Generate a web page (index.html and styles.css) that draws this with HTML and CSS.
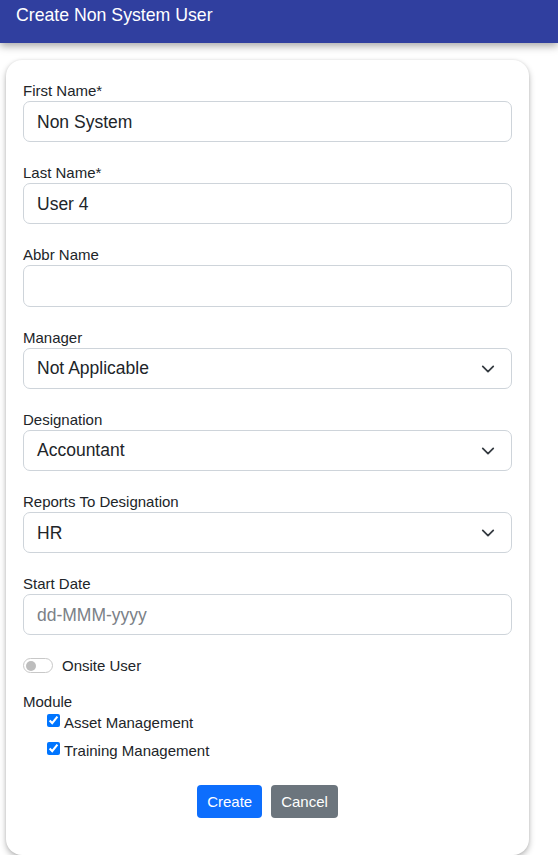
FILE: index.html
```html
<!DOCTYPE html>
<html>
<head>
<meta charset="utf-8">
<link rel="stylesheet" href="styles.css">
</head>
<body>
<header class="topbar"><span class="title">Create Non System User</span></header>
<main class="card">
  <div class="field">
    <label class="lbl">First Name*</label>
    <input class="ctl" type="text" value="Non System">
  </div>
  <div class="field">
    <label class="lbl">Last Name*</label>
    <input class="ctl" type="text" value="User 4">
  </div>
  <div class="field">
    <label class="lbl">Abbr Name</label>
    <input class="ctl" type="text" value="">
  </div>
  <div class="field">
    <label class="lbl">Manager</label>
    <div class="sel"><span>Not Applicable</span><svg class="chev" width="16" height="16" viewBox="0 0 16 16"><path d="M2 5l6 6 6-6" fill="none" stroke="#343a40" stroke-width="2" stroke-linecap="round" stroke-linejoin="round"/></svg></div>
  </div>
  <div class="field">
    <label class="lbl">Designation</label>
    <div class="sel"><span>Accountant</span><svg class="chev" width="16" height="16" viewBox="0 0 16 16"><path d="M2 5l6 6 6-6" fill="none" stroke="#343a40" stroke-width="2" stroke-linecap="round" stroke-linejoin="round"/></svg></div>
  </div>
  <div class="field">
    <label class="lbl">Reports To Designation</label>
    <div class="sel"><span>HR</span><svg class="chev" width="16" height="16" viewBox="0 0 16 16"><path d="M2 5l6 6 6-6" fill="none" stroke="#343a40" stroke-width="2" stroke-linecap="round" stroke-linejoin="round"/></svg></div>
  </div>
  <div class="field">
    <label class="lbl">Start Date</label>
    <input class="ctl" type="text" placeholder="dd-MMM-yyyy">
  </div>
  <div class="switchrow">
    <span class="switch"><span class="knob"></span></span>
    <span class="lbl">Onsite User</span>
  </div>
  <div class="lbl module">Module</div>
  <div class="checks">
    <label class="chk"><input type="checkbox" checked>Asset Management</label>
    <label class="chk"><input type="checkbox" checked>Training Management</label>
  </div>
  <div class="actions">
    <button class="btn primary">Create</button>
    <button class="btn secondary">Cancel</button>
  </div>
</main>
</body>
</html>
```

FILE: styles.css
```css
* { box-sizing: border-box; }
html, body { margin: 0; padding: 0; background: #fff; }
body { font-family: "Liberation Sans", Arial, sans-serif; color: #212529; width: 558px; }
.topbar {
  height: 43px;
  background: #303f9f;
  box-shadow: 0 3px 8px rgba(0,0,0,0.35);
  padding: 4px 16px 0;
  position: relative;
  z-index: 2;
}
.title { color: #fff; font-size: 17.7px; line-height: 22px; }
.card {
  margin: 17px 0 0 6px;
  width: 523px;
  height: 795px;
  background: #fff;
  border-radius: 16px;
  box-shadow: 0 3px 6px rgba(0,0,0,0.28), 0 0 3px rgba(0,0,0,0.08);
  padding: 20px 17px 0;
}
.field { margin-bottom: 20px; }
.lbl { display: block; font-size: 15px; line-height: 21px; color: #212529; }
.ctl, .sel {
  display: block;
  width: 100%;
  height: 41.2px;
  border: 1px solid #ced4da;
  border-radius: 7px;
  padding: 1px 13px 0;
  font-family: "Liberation Sans", Arial, sans-serif;
  font-size: 17.5px;
  color: #212529;
  background: #fff;
  outline: none;
}
.ctl::placeholder { color: #7b8187; }
.sel { display: flex; align-items: center; justify-content: space-between; padding-right: 16px; }
.chev { width: 14px; height: 14px; }
.switchrow { display: flex; align-items: center; height: 21px; gap: 9px; margin-top: 1px; }
.switch {
  width: 30px; height: 15px;
  border: 1px solid #c8c8c8;
  border-radius: 8px;
  display: flex; align-items: center;
  padding-left: 2px;
}
.knob { width: 10px; height: 10px; border-radius: 50%; background: #bdbdbd; }
.module { margin-top: 15px; }
.checks { padding-left: 24px; display: flex; flex-direction: column; gap: 7px; }
.chk { display: flex; align-items: center; font-size: 15px; line-height: 21px; height: 21px; }
.chk input { margin: 0 4px 0 0; width: 13px; height: 13px; position: relative; top: -2px; }
.actions { display: flex; justify-content: center; gap: 9px; margin-top: 24px; }
.btn {
  font-family: "Liberation Sans", Arial, sans-serif;
  font-size: 15px;
  line-height: 21px;
  height: 33px;
  padding: 0 10px;
  border: none;
  border-radius: 4px;
  color: #fff;
}
.primary { background: #0d6efd; }
.secondary { background: #6c757d; }
```
